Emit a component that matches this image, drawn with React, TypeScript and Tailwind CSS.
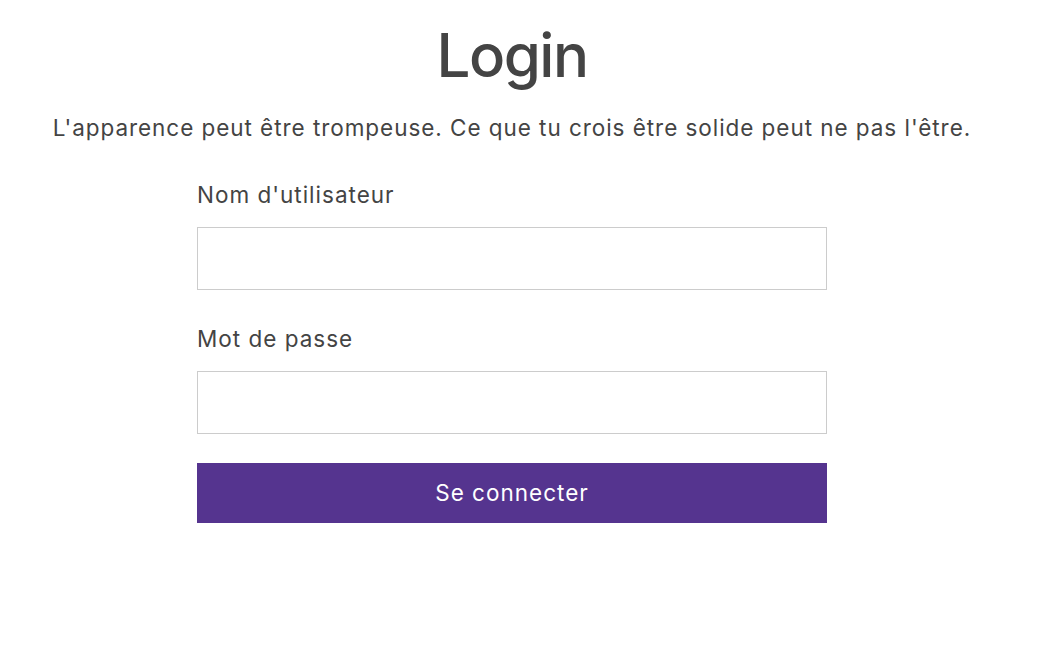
export default function App() {
    return (
        <div className="w-full min-h-screen bg-white" style={{ fontFamily: "Inter, 'Noto Sans', sans-serif" }}>
            <div className="w-[1024px] flex flex-col items-center pt-[25px] text-[#444444]">
                <h1 className="text-[60px] leading-none font-medium tracking-[-1.5px]">Login</h1>
                <p className="mt-[29px] text-[22.5px] leading-[28px] tracking-[0.95px]">
                    L'apparence peut être trompeuse. Ce que tu crois être solide peut ne pas l'être.
                </p>

                <form className="w-[630px] mt-[39px] flex flex-col">
                    <label className="text-[22.5px] leading-[28px] tracking-[1px]">Nom d'utilisateur</label>
                    <input
                        type="text"
                        className="mt-[18px] h-[63px] w-full border border-[#cccccc] px-3 text-[18px] focus:outline-none"
                    />

                    <label className="mt-[35px] text-[22.5px] leading-[28px] tracking-[1px]">Mot de passe</label>
                    <input
                        type="password"
                        className="mt-[18px] h-[63px] w-full border border-[#cccccc] px-3 text-[18px] focus:outline-none"
                    />

                    <button
                        type="button"
                        className="mt-[29px] h-[60px] w-full bg-[#55348f] text-white text-[22.5px] tracking-[1px]"
                    >
                        Se connecter
                    </button>
                </form>
            </div>
        </div>
    );
}
